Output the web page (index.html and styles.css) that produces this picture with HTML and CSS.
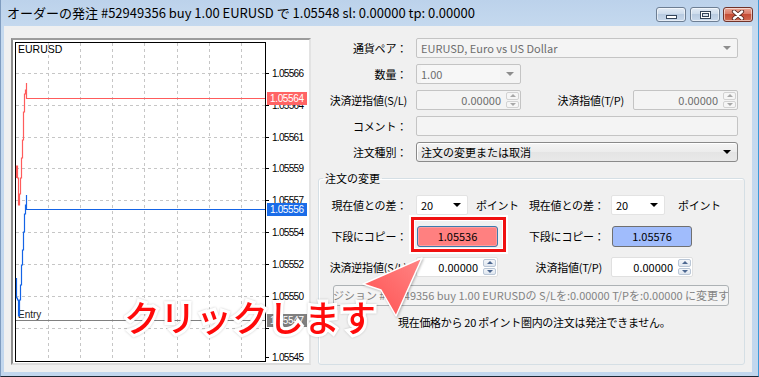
FILE: index.html
```html
<!DOCTYPE html>
<html lang="ja">
<head>
    <meta charset="UTF-8">
    <meta name="viewport" content="width=device-width, initial-scale=1.0">
    <title>オーダーの発注</title>
    <link rel="stylesheet" href="styles.css">
</head>
<body>
    <div class="window">
        <div class="titlebar">
            <span class="title">オーダーの発注 #52949356 buy 1.00 EURUSD で 1.05548 sl: 0.00000 tp: 0.00000</span>
            <div class="caption-buttons">
                <span class="cap-btn min"><i></i></span>
                <span class="cap-btn max"><i></i></span>
                <span class="cap-btn close">
                    <svg width="14" height="10" viewBox="0 0 14 10">
                        <path d="M3 1.5 L11 8.5 M11 1.5 L3 8.5" stroke="#5a2a22" stroke-width="4.2" stroke-linecap="round"/>
                        <path d="M3 1.5 L11 8.5 M11 1.5 L3 8.5" stroke="#fff" stroke-width="2.4" stroke-linecap="round"/>
                    </svg>
                </span>
            </div>
        </div>

        <div class="client">
            <div class="chart-panel">
                <svg class="chart" width="296" height="323" viewBox="13 40 296 323">
                    <rect x="13" y="40" width="296" height="323" fill="#fff"/>
                    <!-- grid -->
                    <g stroke="#c6c6c6" stroke-width="1" stroke-dasharray="3 3">
                        <path d="M48.5 43 V361 M80.5 43 V361 M112.5 43 V361 M144.5 43 V361 M177.5 43 V361 M209.5 43 V361 M241.5 43 V361"/>
                        <path d="M16 73.5 H265 M16 105.5 H265 M16 137.5 H265 M16 168.5 H265 M16 200.5 H265 M16 232.5 H265 M16 264.5 H265 M16 296.5 H265 M16 328.5 H265"/>
                    </g>
                    <rect x="15.5" y="42.5" width="250" height="319" fill="none" stroke="#000"/>
                    <path d="M265 73.5 H269 M265 105.5 H269 M265 137.5 H269 M265 168.5 H269 M265 200.5 H269 M265 232.5 H269 M265 264.5 H269 M265 296.5 H269 M265 328.5 H269 M265 357.5 H269" stroke="#000"/>
                    <g class="axis-label">
                        <text x="272" y="77" textLength="32">1.05566</text>
                        <text x="272" y="109" textLength="32">1.05564</text>
                        <text x="272" y="141" textLength="32">1.05561</text>
                        <text x="272" y="172" textLength="32">1.05559</text>
                        <text x="272" y="204" textLength="32">1.05557</text>
                        <text x="272" y="236" textLength="32">1.05554</text>
                        <text x="272" y="268" textLength="32">1.05552</text>
                        <text x="272" y="300" textLength="32">1.05550</text>
                        <text x="272" y="361" textLength="32">1.05545</text>
                    </g>
                    <text class="symbol" x="18" y="53">EURUSD</text>

                    <!-- entry line -->
                    <path d="M16 320.5 H265" stroke="#808080"/>
                    <text class="entry" x="18" y="318">Entry</text>
                    <rect x="267" y="314" width="40" height="13" fill="#808080"/>
                    <text class="tag" x="270" y="324" textLength="34">1.05547</text>

                    <!-- price lines -->
                    <path d="M16.5 178 V166 H17.5 V178 H18.5 V205 H19.5 V194 H20.5 V178 H21.5 V158 H22.5 V140 H23.5 V112 H24.5 V94 H25.5 V90 H26.5 V83 V98.5 H265" fill="none" stroke="#ff5c5c" stroke-width="1.2"/>
                    <path d="M16.5 278 V298 H17.5 V300 H18.5 V316 H19.5 V300 H20.5 V285 H21.5 V265 H22.5 V250 H23.5 V232 H24.5 V214 H25.5 V205 H26.5 V195 V209.5 H265" fill="none" stroke="#1464e6" stroke-width="1.2"/>

                    <rect x="267" y="92" width="40" height="13" fill="#ff6464"/>
                    <text class="tag" x="270" y="102" textLength="34">1.05564</text>
                    <rect x="267" y="203" width="40" height="13" fill="#1a6ce8"/>
                    <text class="tag" x="270" y="213" textLength="34">1.05556</text>
                </svg>
            </div>

            <div class="order-form">
                <div class="top-grid">
                    <span class="lbl">通貨ペア：</span>
                    <div class="field disabled span3">EURUSD, Euro vs US Dollar<span class="arrow"></span></div>

                    <span class="lbl">数量：</span>
                    <div class="field disabled"><span class="inner">1.00</span><span class="arrow"></span></div>
                    <span></span><span></span>

                    <span class="lbl">決済逆指値(S/L)</span>
                    <div class="field disabled spin"><span class="val">0.00000</span><span class="spin-btns"><i class="up"></i><i class="down"></i></span></div>
                    <span class="lbl">決済指値(T/P)</span>
                    <div class="field disabled spin"><span class="val">0.00000</span><span class="spin-btns"><i class="up"></i><i class="down"></i></span></div>

                    <span class="lbl">コメント：</span>
                    <div class="field disabled span3"></div>

                    <span class="lbl">注文種別：</span>
                    <div class="field select span3">注文の変更または取消<span class="arrow dark"></span></div>
                </div>

                <fieldset class="modify">
                    <legend>注文の変更</legend>
                    <div class="mod-grid">
                        <span class="lbl">現在値との差：</span>
                        <div class="cell"><div class="field combo">20<span class="arrow dark"></span></div><span class="unit">ポイント</span></div>
                        <span class="lbl">現在値との差：</span>
                        <div class="cell"><div class="field combo wide">20<span class="arrow dark"></span></div><span class="unit far">ポイント</span></div>

                        <span class="lbl">下段にコピー：</span>
                        <div class="cell"><div class="copy-btn sell">1.05536</div></div>
                        <span class="lbl">下段にコピー：</span>
                        <div class="cell"><div class="copy-btn buy">1.05576</div></div>

                        <span class="lbl">決済逆指値(S/L)</span>
                        <div class="cell"><div class="field spin live"><span class="val">0.00000</span><span class="spin-btns"><i class="up"></i><i class="down"></i></span></div></div>
                        <span class="lbl">決済指値(T/P)</span>
                        <div class="cell"><div class="field spin live"><span class="val">0.00000</span><span class="spin-btns"><i class="up"></i><i class="down"></i></span></div></div>
                    </div>
                    <div class="modify-btn"><span>ポジション #52949356 buy 1.00 EURUSDの S/Lを:0.00000 T/Pを:0.00000 に変更する</span></div>
                    <p class="note">現在価格から 20 ポイント圏内の注文は発注できません。</p>
                </fieldset>
            </div>
        </div>

        <!-- annotation -->
        <div class="highlight"></div>
        <svg class="pointer" width="80" height="80" viewBox="0 0 80 80">
            <defs>
                <linearGradient id="pg" x1="0" y1="1" x2="1" y2="0">
                    <stop offset="0" stop-color="#ff4f4f"/>
                    <stop offset="1" stop-color="#ff8585"/>
                </linearGradient>
            </defs>
            <path d="M67 8 L8 34 L26 40 L41 66 Z" fill="url(#pg)" stroke="#fff" stroke-width="1.5" stroke-linejoin="round"/>
        </svg>
        <div class="callout">クリックします</div>
    </div>
</body>
</html>
```

FILE: styles.css
```css
* {
    box-sizing: border-box;
}
body {
    margin: 0;
    background: #fff;
    font-family: "Noto Sans CJK JP", sans-serif;
    font-size: 11px;
    color: #000;
}
.window {
    position: relative;
    width: 759px;
    height: 377px;
    background: linear-gradient(#bcd2eb, #c6daef 30px, #c2d7ee);
    border-left: 1px solid #7f9cc0;
    border-right: 1px solid #3c9ad8;
    border-bottom: 1px solid #1c2633;
    overflow: hidden;
}

/* title bar */
.titlebar {
    height: 26px;
    display: flex;
    align-items: flex-start;
    padding: 0 5px 0 6px;
}
.title {
    font-size: 13px;
    line-height: 26px;
    white-space: nowrap;
}
.caption-buttons {
    margin-left: auto;
    margin-top: 7px;
    display: flex;
}
.cap-btn {
    height: 15px;
    width: 30px;
    border: 1px solid #6d7e93;
    border-radius: 3px;
    background: linear-gradient(#e2ebf5, #cbdaeb 50%, #b8cbe1 50%, #c9d9eb);
    box-shadow: inset 0 0 0 1px rgba(255, 255, 255, 0.55);
    display: flex;
    align-items: center;
    justify-content: center;
}
.cap-btn.min {
    margin-right: 4px;
}
.cap-btn.max {
    margin-right: 3px;
}
.cap-btn.close {
    width: 30px;
    border-color: #70332a;
    background: linear-gradient(#eaa797, #d87663 50%, #c54d36 50%, #d16a50);
}
.min i {
    width: 11px;
    height: 4px;
    margin-top: 4px;
    border: 1px solid #34455a;
    background: #fff;
}
.max i {
    width: 11px;
    height: 8px;
    border: 1px solid #34455a;
    background: #d9e3ee;
    box-shadow: inset 0 0 0 1px #fff, inset 0 0 0 2px #34455a;
}

/* client */
.client {
    margin: 0 6px 0 3px;
    height: 346px;
    background: #f0f0f0;
    display: flex;
    gap: 7px;
    padding: 12px 0 0 7px;
}
.chart-panel {
    width: 300px;
    height: 327px;
    border: 2px solid;
    border-color: #9c9c9c #e3e3e3 #dcdcdc #8c8c8c;
}
.chart {
    display: block;
}
.axis-label text,
.symbol,
.entry,
.tag {
    font-family: "Liberation Sans", Arial, sans-serif;
    font-size: 10px;
    fill: #000;
}
.symbol {
    font-size: 10.5px;
}
.entry {
    font-size: 10px;
    fill: #222;
}
.tag {
    fill: #fff;
}

/* form */
.order-form {
    width: 427px;
}
.top-grid {
    display: grid;
    grid-template-columns: 89px 105px 94px 105px;
    grid-auto-rows: 20px;
    column-gap: 9px;
    row-gap: 6px;
}
.lbl {
    text-align: right;
    line-height: 20px;
    white-space: nowrap;
    letter-spacing: -0.2px;
}
.span3 {
    grid-column: 2 / 5;
}
.field {
    height: 20px;
    border: 1px solid #c4c4c4;
    border-radius: 2px;
    display: flex;
    align-items: center;
    padding: 0 4px;
    line-height: 18px;
    white-space: nowrap;
}
.field.disabled {
    background: #f4f4f4;
    color: #6d6d6d;
}
.field .inner {
    flex: 1;
    background: #f7f7f7;
    margin-right: 6px;
}
.arrow {
    margin-left: auto;
    margin-right: 2px;
    width: 0;
    height: 0;
    border-left: 4px solid transparent;
    border-right: 4px solid transparent;
    border-top: 4px solid #8d8d8d;
}
.arrow.dark {
    border-top-color: #000;
}
.field.select {
    border-color: #8a8a8a;
    border-radius: 3px;
    background: linear-gradient(#f5f5f5, #ececec 50%, #e4e4e4 50%, #e9e9e9);
    box-shadow: inset 1px 1px 0 #fff;
}
.spin {
    padding-right: 1px;
}
.spin .val {
    flex: 1;
    text-align: right;
    padding-right: 5px;
}
.spin-btns {
    width: 13px;
    height: 16px;
    display: flex;
    flex-direction: column;
    gap: 1px;
}
.spin-btns i {
    flex: 1;
    border: 1px solid #d2d2d2;
    border-radius: 2px;
    background: #f6f6f6;
    display: flex;
    align-items: center;
    justify-content: center;
}
.spin-btns i::after {
    content: "";
    border-left: 3px solid transparent;
    border-right: 3px solid transparent;
}
.spin-btns .up::after {
    border-bottom: 3px solid #a8a8a8;
}
.spin-btns .down::after {
    border-top: 3px solid #a8a8a8;
}

/* group box */
.modify {
    margin: 9px 0 0;
    padding: 10px 0 0;
    min-width: 0;
    height: 194px;
    border: 1px solid #d5dfe5;
    border-radius: 3px;
    box-shadow: inset 1px 1px 0 #fff;
}
.modify legend {
    margin-left: 4px;
    padding: 0 2px;
    line-height: 14px;
}
.mod-grid {
    display: grid;
    grid-template-columns: 88px 104px 73px auto;
    grid-template-rows: 20px 22px 20px;
    column-gap: 9px;
    row-gap: 10px;
}
.mod-grid .lbl:nth-child(5),
.mod-grid .lbl:nth-child(7) {
    line-height: 22px;
}
.cell {
    display: flex;
    align-items: center;
}
.field.combo {
    width: 52px;
    background: #fff;
    border-color: #e3e3e3;
}
.field.combo.wide {
    width: 54px;
}
.unit {
    margin-left: 8px;
    letter-spacing: -0.3px;
}
.unit.far {
    margin-left: 13px;
}
.copy-btn {
    height: 21px;
    width: 81px;
    margin-left: 1px;
    border: 1px solid #707070;
    border-radius: 3px;
    text-align: center;
    line-height: 19px;
}
.copy-btn.sell {
    background: #ff8080;
    border-color: #3d7bad;
    box-shadow: inset 0 0 0 1px #ff9c9c;
}
.copy-btn.buy {
    width: 80px;
    background: #a0bcfc;
}
.field.live {
    width: 82px;
    background: #fff;
    border-color: #e0e0e0;
}
.field.live .spin-btns i {
    background: linear-gradient(#f3f6fa, #dfe6ef);
    border-color: #b9c6d6;
}
.field.live .spin-btns .up::after {
    border-bottom-color: #4c6790;
}
.field.live .spin-btns .down::after {
    border-top-color: #4c6790;
}
.modify-btn {
    margin: 8px 15px 0 14px;
    height: 21px;
    border: 1px solid #adb2b5;
    border-radius: 3px;
    background: #f4f4f4;
    color: #838383;
    overflow: hidden;
    white-space: nowrap;
    display: flex;
    justify-content: center;
    line-height: 19px;
}
.modify-btn span {
    flex-shrink: 0;
}
.note {
    margin: 9px 0 0 79px;
    line-height: 14px;
    letter-spacing: -0.3px;
}

/* annotation overlay */
.highlight {
    position: absolute;
    left: 410px;
    top: 217px;
    width: 95px;
    height: 35px;
    border: 3px solid #f01010;
    box-shadow: 0 0 0 2px #fff, inset 0 0 0 1px #fff;
}
.pointer {
    position: absolute;
    left: 354px;
    top: 250px;
    filter: drop-shadow(1px 1px 1px rgba(0, 0, 0, 0.25));
}
.callout {
    position: absolute;
    left: 123px;
    top: 298px;
    font-size: 36px;
    font-weight: 500;
    line-height: 1;
    color: #ff0a0a;
    white-space: nowrap;
    -webkit-text-stroke: 6px #fff;
    paint-order: stroke fill;
    filter: drop-shadow(0 0 1px rgba(0, 0, 0, 0.2));
}
```
